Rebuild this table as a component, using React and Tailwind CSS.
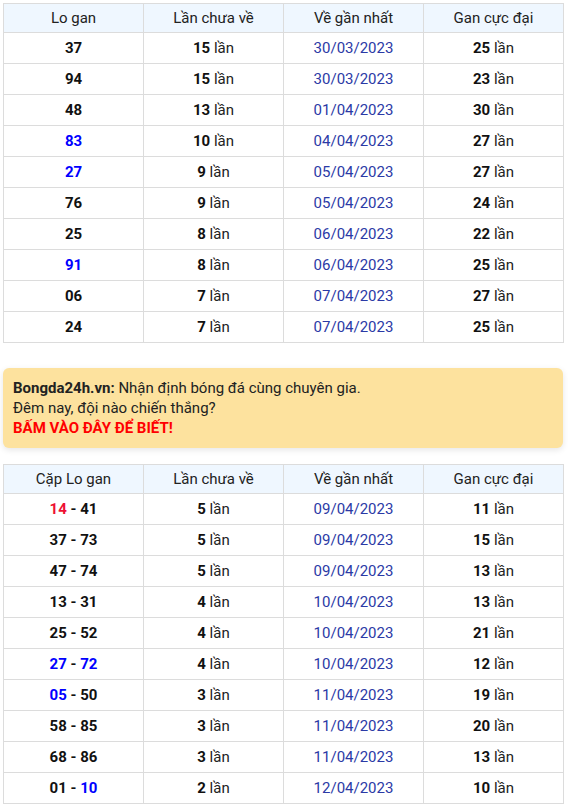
import React from "react";

const t1 = [
  ["37", "", "15", "30/03/2023", "25"],
  ["94", "", "15", "30/03/2023", "23"],
  ["48", "", "13", "01/04/2023", "30"],
  ["83", "b", "10", "04/04/2023", "27"],
  ["27", "b", "9", "05/04/2023", "27"],
  ["76", "", "9", "05/04/2023", "24"],
  ["25", "", "8", "06/04/2023", "22"],
  ["91", "b", "8", "06/04/2023", "25"],
  ["06", "", "7", "07/04/2023", "27"],
  ["24", "", "7", "07/04/2023", "25"],
];

const t2 = [
  [["14", "r"], ["41", ""], "5", "09/04/2023", "11"],
  [["37", ""], ["73", ""], "5", "09/04/2023", "15"],
  [["47", ""], ["74", ""], "5", "09/04/2023", "13"],
  [["13", ""], ["31", ""], "4", "10/04/2023", "13"],
  [["25", ""], ["52", ""], "4", "10/04/2023", "21"],
  [["27", "b"], ["72", "b"], "4", "10/04/2023", "12"],
  [["05", "b"], ["50", ""], "3", "11/04/2023", "19"],
  [["58", ""], ["85", ""], "3", "11/04/2023", "20"],
  [["68", ""], ["86", ""], "3", "11/04/2023", "13"],
  [["01", ""], ["10", "b"], "2", "12/04/2023", "10"],
];

const color = (c) =>
  c === "b" ? "text-[#0000ff]" : c === "r" ? "text-[#ee1133]" : "text-[#111111]";

const th = "h-[29px] border border-[#dcdcdc] bg-[#eff7ff] font-normal text-[15px] text-[#222] w-[140px] p-0";
const td = "h-[31px] border border-[#dcdcdc] text-[15px] w-[140px] p-0 text-center";

function Header({ first }) {
  return (
    <thead>
      <tr>
        <th className={th}>{first}</th>
        <th className={th}>Lần chưa về</th>
        <th className={th}>Về gần nhất</th>
        <th className={th}>Gan cực đại</th>
      </tr>
    </thead>
  );
}

function Lan({ n }) {
  return (
    <span className="text-[#222]">
      <b className="font-bold text-[#111]">{n}</b> lần
    </span>
  );
}

export default function App() {
  return (
    <div
      className="bg-white px-[3px] pt-[3px] pb-[4px] w-[568px]"
      style={{ fontFamily: "Roboto, 'Noto Sans', sans-serif" }}
    >
      <table className="border-collapse w-[561px] table-fixed">
        <Header first="Lo gan" />
        <tbody>
          {t1.map((r, i) => (
            <tr key={i}>
              <td className={td}>
                <b className={"font-bold " + color(r[1])}>{r[0]}</b>
              </td>
              <td className={td}>
                <Lan n={r[2]} />
              </td>
              <td className={td + " text-[#2b3aa6]"}>{r[3]}</td>
              <td className={td}>
                <Lan n={r[4]} />
              </td>
            </tr>
          ))}
        </tbody>
      </table>

      <div className="mt-[25px] w-[560px] h-[80px] rounded-[6px] bg-[#fde29e] px-[10px] py-[10px] text-[15px] leading-[20px] text-[#222] shadow-[0_2px_6px_rgba(0,0,0,0.10)]">
        <div>
          <b className="font-bold">Bongda24h.vn:</b> Nhận định bóng đá cùng chuyên gia.
        </div>
        <div>Đêm nay, đội nào chiến thắng?</div>
        <div className="font-bold text-[#ff0000]">BẤM VÀO ĐÂY ĐỂ BIẾT!</div>
      </div>

      <table className="mt-[16px] border-collapse w-[561px] table-fixed">
        <Header first="Cặp Lo gan" />
        <tbody>
          {t2.map((r, i) => (
            <tr key={i}>
              <td className={td + " font-bold"}>
                <span className={color(r[0][1])}>{r[0][0]}</span>
                <span className="text-[#111]"> - </span>
                <span className={color(r[1][1])}>{r[1][0]}</span>
              </td>
              <td className={td}>
                <Lan n={r[2]} />
              </td>
              <td className={td + " text-[#2b3aa6]"}>{r[3]}</td>
              <td className={td}>
                <Lan n={r[4]} />
              </td>
            </tr>
          ))}
        </tbody>
      </table>
    </div>
  );
}
